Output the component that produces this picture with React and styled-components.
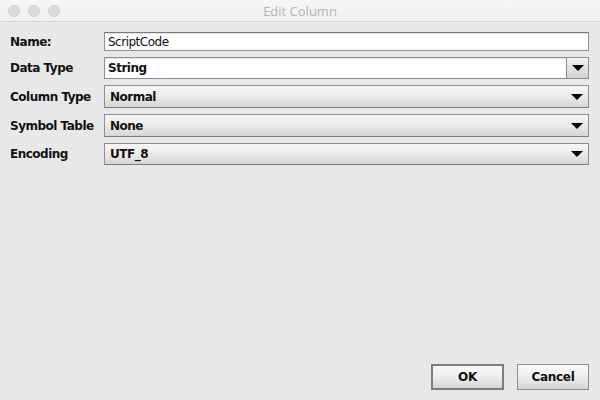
import React from 'react'
import styled, { createGlobalStyle } from 'styled-components'

const Global = createGlobalStyle`
  html, body { margin: 0; padding: 0; }
  body { font-family: "DejaVu Sans", "Liberation Sans", sans-serif; }
`

const Window = styled.div`
  width: 600px;
  height: 400px;
  display: flex;
  flex-direction: column;
  background: #e8e8e8;
  overflow: hidden;
`

const TitleBar = styled.div`
  height: 22px;
  flex: none;
  display: flex;
  align-items: center;
  position: relative;
  background: linear-gradient(#f7f7f7, #f1f1f1);
  border-bottom: 1px solid #d6d6d6;
  box-sizing: border-box;
`

const Lights = styled.div`
  display: flex;
  gap: 8px;
  padding-left: 8px;
`

const Light = styled.span`
  width: 12px;
  height: 12px;
  border-radius: 50%;
  background: #dcdcdc;
  border: 1px solid #d0d0d0;
  box-sizing: border-box;
`

const Title = styled.div`
  position: absolute;
  left: 0;
  right: 0;
  text-align: center;
  font-size: 13px;
  color: #b3b3b3;
  font-family: "Open Sans", "DejaVu Sans", sans-serif;
  pointer-events: none;
`

const Body = styled.div`
  flex: 1;
  display: flex;
  flex-direction: column;
  padding: 10px 11px 10px 10px;
`

const Form = styled.div`
  display: grid;
  grid-template-columns: 94px 1fr;
  grid-template-rows: 19px 22px 23px 23px 22px;
  row-gap: 6px;
  align-items: stretch;
`

const Label = styled.div`
  display: flex;
  align-items: center;
  font-size: 12px;
  font-weight: bold;
  letter-spacing: -0.5px;
  color: #111;
`

const TextField = styled.div`
  border: 1px solid #8e8e8e;
  border-top-color: #7a7a7a;
  background: #fff;
  display: flex;
  align-items: center;
  padding-left: 3px;
  font-size: 12px;
  letter-spacing: -0.5px;
  color: #111;
  box-shadow: inset 0 1px 1px rgba(0, 0, 0, 0.12);
`

const EditCombo = styled.div`
  display: flex;
  border: 1px solid #8e8e8e;
  background: #fff;
`

const ComboText = styled.div`
  flex: 1;
  display: flex;
  align-items: center;
  padding-left: ${p => p.$pad || 5}px;
  font-size: 12px;
  font-weight: bold;
  letter-spacing: -0.5px;
  color: #111;
  box-shadow: ${p => (p.$inset ? 'inset 0 1px 1px rgba(0,0,0,0.12)' : 'none')};
`

const ArrowButton = styled.div`
  width: 21px;
  border-left: 1px solid #8e8e8e;
  display: flex;
  align-items: center;
  justify-content: center;
  background: linear-gradient(#f4f4f4, #e2e2e2 50%, #d2d2d2);
`

const Combo = styled.div`
  display: flex;
  border: 1px solid #8e8e8e;
  border-bottom-color: #7c7c7c;
  background: linear-gradient(#f6f6f6, #ececec 45%, #dedede 80%, #d4d4d4);
`

const ArrowSlot = styled.div`
  width: 23px;
  display: flex;
  align-items: center;
  justify-content: center;
`

const Tri = styled.span`
  width: 0;
  height: 0;
  border-left: 6px solid transparent;
  border-right: 6px solid transparent;
  border-top: 6px solid #000;
`

const Spacer = styled.div`
  flex: 1;
`

const Footer = styled.div`
  display: flex;
  justify-content: flex-end;
  gap: 13px;
`

const Button = styled.div`
  width: ${p => p.$w}px;
  height: 26px;
  box-sizing: border-box;
  display: flex;
  align-items: center;
  justify-content: center;
  font-size: 12px;
  font-weight: bold;
  letter-spacing: -0.3px;
  color: #111;
  border: ${p => (p.$default ? '2px solid #7d7d7d' : '1px solid #8e8e8e')};
  background: linear-gradient(#f9f9f9, #eeeeee 45%, #dddddd 85%, #d2d2d2);
`

const Arrow = () => <Tri />

export default function App() {
  return (
    <Window>
      <Global />
      <TitleBar>
        <Lights>
          <Light />
          <Light />
          <Light />
        </Lights>
        <Title>Edit Column</Title>
      </TitleBar>
      <Body>
        <Form>
          <Label>Name:</Label>
          <TextField>ScriptCode</TextField>

          <Label>Data Type</Label>
          <EditCombo>
            <ComboText $pad={3} $inset>String</ComboText>
            <ArrowButton><Arrow /></ArrowButton>
          </EditCombo>

          <Label>Column Type</Label>
          <Combo>
            <ComboText>Normal</ComboText>
            <ArrowSlot><Arrow /></ArrowSlot>
          </Combo>

          <Label>Symbol Table</Label>
          <Combo>
            <ComboText>None</ComboText>
            <ArrowSlot><Arrow /></ArrowSlot>
          </Combo>

          <Label>Encoding</Label>
          <Combo>
            <ComboText>UTF_8</ComboText>
            <ArrowSlot><Arrow /></ArrowSlot>
          </Combo>
        </Form>
        <Spacer />
        <Footer>
          <Button $w={73} $default>OK</Button>
          <Button $w={72}>Cancel</Button>
        </Footer>
      </Body>
    </Window>
  )
}
